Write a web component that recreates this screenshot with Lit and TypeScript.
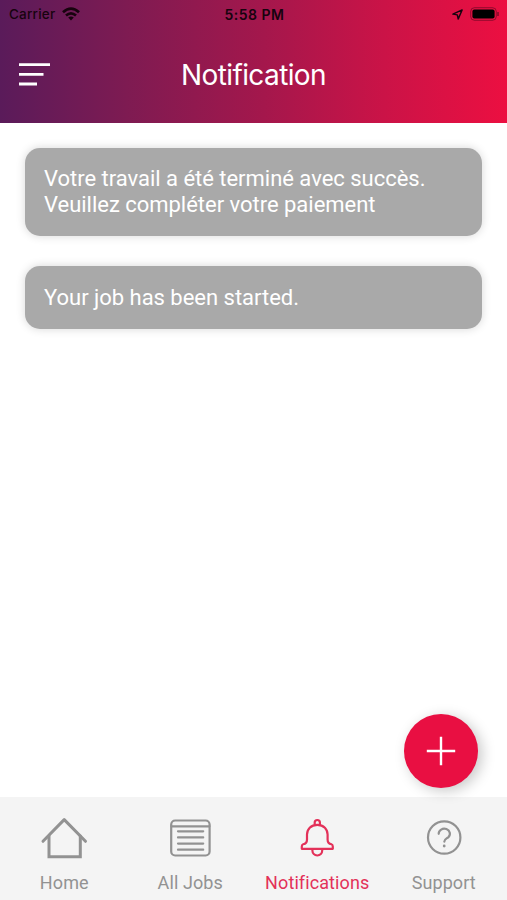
import { LitElement, html, css, svg } from "lit";
import { customElement } from "lit/decorators.js";

const home = svg`<path d="M3 29.3 L24.2 7.6 L45.5 29.3"/><path d="M9 24V44.8H40.3V24" stroke-linejoin="miter"/>`;
const jobs = svg`<rect x="5.2" y="8.5" width="38.4" height="35" rx="4"/><path d="M5.6 14.3H43.4"/><path d="M12 19.3H37.2M12 25.4H37.2M12 31.6H37.2M12 37.7H37.2"/>`;
const bell = svg`<path d="M21.7 12.3V10.6A2.6 2.6 0 0 1 26.9 10.6V12.3"/><path d="M24.3 12.8C17.8 12.8 14 17.2 14 22.6V27.4C14 30.4 12.6 31.7 10.2 32.3C9 32.7 8.8 33.4 8.8 34.4V36.8H39.8V34.4C39.8 33.4 39.6 32.7 38.4 32.3C36 31.7 34.6 30.4 34.6 27.4V22.6C34.6 17.2 30.8 12.8 24.3 12.8Z"/><path d="M19.4 37V38.6A4.9 4.9 0 0 0 29.2 38.6V37"/>`;
const help = svg`<circle cx="24.2" cy="25.5" r="16.2"/><path d="M18.7 21.8A5.6 5 0 1 1 28.2 25.3C25.8 27 24.4 27.4 24.3 29.6"/><circle cx="24.2" cy="34" r="1.4" fill="currentColor" stroke="none"/>`;

const tabs = [
  { cls: "home", label: "Home", icon: home },
  { cls: "jobs", label: "All Jobs", icon: jobs },
  { cls: "alerts", label: "Notifications", icon: bell },
  { cls: "support", label: "Support", icon: help },
];

@customElement("app-root")
export class AppRoot extends LitElement {
  static styles = css`
    :host { display: flex; flex-direction: column; position: relative; height: 900px; width: 507px; background: #fff; font-family: Roboto, sans-serif; overflow: hidden; }
    svg { display: block; fill: none; stroke: currentColor; }
    header { height: 123px; flex: none; background: linear-gradient(90deg, #5a1b5a 0%, #7e1b52 25%, #a4174c 52%, #cb1347 76%, #ec0f41 100%); }
    .status { height: 27px; display: grid; grid-template-columns: 1fr auto 1fr; align-items: center; padding: 0 7px 0 9px; color: #17030e; font: 500 13.5px/27px Inter, sans-serif; }
    .carrier { display: flex; align-items: center; gap: 7px; letter-spacing: .2px; line-height: 28px; }
    .time { font-weight: 600; font-size: 14px; letter-spacing: .5px; }
    .right { display: flex; justify-content: flex-end; align-items: center; gap: 7px; }
    .bar { height: 95px; display: grid; grid-template-columns: 1fr auto 1fr; align-items: center; padding: 0 19px; color: #fff; }
    h1 { margin: 0; font: 400 28px/34px Inter, sans-serif; letter-spacing: -.6px; }
    .menu { width: 31px; height: 24px; }
    main { flex: 1; padding: 25px 25px 0; display: flex; flex-direction: column; gap: 30px; }
    .card { background: #a9a9a9; color: #fff; border-radius: 15px; padding: 18.5px 19px 18.5px; font-size: 22px; line-height: 25.7px; letter-spacing: -.02px; box-shadow: 0 0 10px rgba(0,0,0,.16); }
    .card:first-child { padding: 18px 19px 19px; }
    .first { width: 400px; }
    .fab { position: absolute; left: 404px; top: 714px; width: 74px; height: 74px; border-radius: 50%; background: #e90f42; color: #fff; display: grid; place-items: center; box-shadow: 4px 3px 14px rgba(0,0,0,.22); }
    nav { height: 103px; flex: none; display: grid; grid-template-columns: repeat(4, 126.5px); background: #f4f4f4; position: relative; }
    .tab { display: flex; flex-direction: column; align-items: center; padding: 15px 0 0 2px; box-sizing: border-box; color: #929292; font-size: 18px; line-height: 22px; letter-spacing: .1px; }
    .tab svg { width: 48px; height: 48px; margin-bottom: 12px; stroke-width: 2.2; stroke-linecap: round; stroke-linejoin: round; }
    .tab.home svg { stroke-width: 3; }
    .tab.jobs { padding-left: 1px; }
    .tab.alerts { color: #e33159; }
  `;

  render() {
    return html`
      <header>
        <div class="status">
          <div class="carrier"><span>Carrier</span>
            <svg width="18" height="14" viewBox="0 0 18 14" stroke-width="2.7"><path d="M1 5.2Q9 -2 17 5.2"/><path d="M4 8.5Q9 4.2 14 8.5"/><path d="M9 13.5L6.2 10.6Q9 8.5 11.8 10.6Z" fill="currentColor" stroke="none"/></svg>
          </div>
          <div class="time">5:58 PM</div>
          <div class="right">
            <svg width="11" height="11" viewBox="0 0 12 12" stroke-width="1.6" stroke-linejoin="round"><path d="M1 5.6L11 1L6.8 11L5.8 6.4Z"/></svg>
            <svg width="30" height="14" viewBox="0 0 30 14"><rect x=".7" y=".7" width="25.6" height="12.6" rx="3.8" stroke-opacity=".4"/><rect x="2.4" y="2.4" width="22.2" height="9.2" rx="2" fill="#000" stroke="none"/><path d="M28 5V9" stroke-opacity=".5" stroke-width="1.5"/></svg>
          </div>
        </div>
        <div class="bar">
          <svg class="menu" viewBox="0 0 31 24" stroke-width="2.8"><path d="M0 1.6H31M0 11.3H24.5M0 21H18"/></svg>
          <h1>Notification</h1>
        </div>
      </header>
      <main>
        <div class="card"><div class="first">Votre travail a été terminé avec succès. Veuillez compléter votre paiement</div></div>
        <div class="card">Your job has been started.</div>
      </main>
      <nav>${tabs.map((t) => html`<div class="tab ${t.cls}"><svg viewBox="0 0 48 48">${t.icon}</svg><span>${t.label}</span></div>`)}</nav>
      <div class="fab"><svg width="30" height="30" viewBox="0 0 30 30" stroke-width="2.4"><path d="M15 .8V29.2M.8 15H29.2"/></svg></div>
    `;
  }
}
